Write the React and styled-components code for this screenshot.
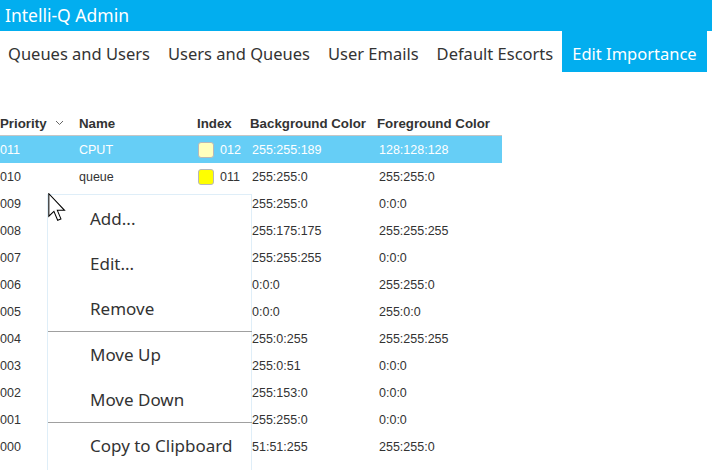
import React from 'react';
import styled, { createGlobalStyle } from 'styled-components';

const GlobalStyle = createGlobalStyle`
  html, body {
    margin: 0;
    padding: 0;
    background: #ffffff;
    overflow: hidden;
  }
  body {
    font-family: "Noto Sans", "Open Sans", sans-serif;
  }
`;

const Page = styled.div`
  position: relative;
  width: 712px;
  height: 470px;
  overflow: hidden;
`;

const TitleBar = styled.div`
  height: 31px;
  background: #02aeef;
  color: #ffffff;
  font-size: 17.5px;
  line-height: 31px;
  padding-left: 5px;
`;

const TabRow = styled.div`
  display: flex;
  height: 41px;
  white-space: nowrap;
`;

const Tab = styled.div`
  flex-shrink: 0;
  display: flex;
  align-items: center;
  padding: 3px ${p => (p.active ? 10 : 9)}px 0 ${p => (p.first ? 8 : p.active ? 10 : 9)}px;
  font-size: 16.5px;
  color: ${p => (p.active ? '#ffffff' : '#333333')};
  background: ${p => (p.active ? '#02aeef' : 'transparent')};
`;

const Table = styled.div`
  margin-top: 39px;
  width: 502px;
  font-family: "Liberation Sans", Arial, sans-serif;
  font-size: 12.5px;
`;

const columns = '79px 118px 53px 127px 125px';

const HeaderRow = styled.div`
  display: grid;
  grid-template-columns: ${columns};
  height: 24px;
  align-items: center;
  border-bottom: 1px solid #c6c6c6;
  font-weight: bold;
  font-size: 13.3px;
  color: #333333;
`;

const HeaderCell = styled.div`
  display: flex;
  align-items: center;
  gap: 8px;
`;

const Row = styled.div`
  display: grid;
  grid-template-columns: ${columns};
  height: 27px;
  align-items: center;
  background: ${p => (p.selected ? '#66cef6' : 'transparent')};
  color: ${p => (p.selected ? '#ffffff' : '#333333')};
`;

const Cell = styled.div`
  display: flex;
  align-items: center;
  gap: 6px;
  padding-left: ${p => p.pad || 0}px;
`;

const Swatch = styled.span`
  display: inline-block;
  width: 14px;
  height: 14px;
  border: 1px solid #b8b8b8;
  border-radius: 3px;
  background: ${p => p.color};
  margin-left: 1px;
`;

const Menu = styled.div`
  position: absolute;
  left: 47px;
  top: 194px;
  width: 203px;
  height: 274px;
  padding-top: 1px;
  background: #ffffff;
  border: 1px solid #dfeef8;
  border-bottom: none;
  font-size: 17px;
  color: #333333;
`;

const MenuItem = styled.div`
  height: 45px;
  line-height: 45px;
  padding-left: 42px;
`;

const Separator = styled.div`
  height: 1px;
  background: #a0a0a0;
  margin-right: -1px;
`;

const Cursor = styled.svg`
  position: absolute;
  left: 48px;
  top: 193px;
`;

// rows under the popup only show their priority and colour columns
const rows = [
  ['011', 'CPUT', '#ffffbd', '012', '255:255:189', '128:128:128'],
  ['010', 'queue', '#ffff00', '011', '255:255:0', '255:255:0'],
  ['009', '', null, '', '255:255:0', '0:0:0'],
  ['008', '', null, '', '255:175:175', '255:255:255'],
  ['007', '', null, '', '255:255:255', '0:0:0'],
  ['006', '', null, '', '0:0:0', '255:255:0'],
  ['005', '', null, '', '0:0:0', '255:0:0'],
  ['004', '', null, '', '255:0:255', '255:255:255'],
  ['003', '', null, '', '255:0:51', '0:0:0'],
  ['002', '', null, '', '255:153:0', '0:0:0'],
  ['001', '', null, '', '255:255:0', '0:0:0'],
  ['000', '', null, '', '51:51:255', '255:255:0'],
];

const tabs = ['Queues and Users', 'Users and Queues', 'User Emails', 'Default Escorts', 'Edit Importance'];

export default function App() {
  return (
    <Page>
      <GlobalStyle />
      <TitleBar>Intelli-Q Admin</TitleBar>
      <TabRow>
        {tabs.map((t, i) => (
          <Tab key={t} first={i === 0} active={t === 'Edit Importance'}>{t}</Tab>
        ))}
      </TabRow>

      <Table>
        <HeaderRow>
          <HeaderCell>
            Priority
            <svg width="9" height="6" viewBox="0 0 9 6">
              <path d="M1 1 L4.5 4.5 L8 1" fill="none" stroke="#666" strokeWidth="1" />
            </svg>
          </HeaderCell>
          <HeaderCell>Name</HeaderCell>
          <HeaderCell>Index</HeaderCell>
          <HeaderCell>Background Color</HeaderCell>
          <HeaderCell>Foreground Color</HeaderCell>
        </HeaderRow>
        {rows.map((r, i) => (
          <Row key={r[0]} selected={i === 0}>
            <Cell>{r[0]}</Cell>
            <Cell>{r[1]}</Cell>
            <Cell>
              {r[2] && <Swatch color={r[2]} />}
              {r[3]}
            </Cell>
            <Cell pad={2}>{r[4]}</Cell>
            <Cell pad={2}>{r[5]}</Cell>
          </Row>
        ))}
      </Table>

      <Menu>
        <MenuItem>Add...</MenuItem>
        <MenuItem>Edit...</MenuItem>
        <MenuItem>Remove</MenuItem>
        <Separator />
        <MenuItem>Move Up</MenuItem>
        <MenuItem>Move Down</MenuItem>
        <Separator />
        <MenuItem>Copy to Clipboard</MenuItem>
      </Menu>

      <Cursor width="19" height="29" viewBox="0 0 12.6 19.4">
        <path
          d="M0.5 0.5 L0.5 15.5 L3.9 12.3 L6.4 18.2 L8.6 17.3 L6.2 11.6 L11 11.6 Z"
          fill="#ffffff"
          stroke="#000000"
          strokeWidth="0.7"
          strokeLinejoin="miter"
        />
      </Cursor>
    </Page>
  );
}
